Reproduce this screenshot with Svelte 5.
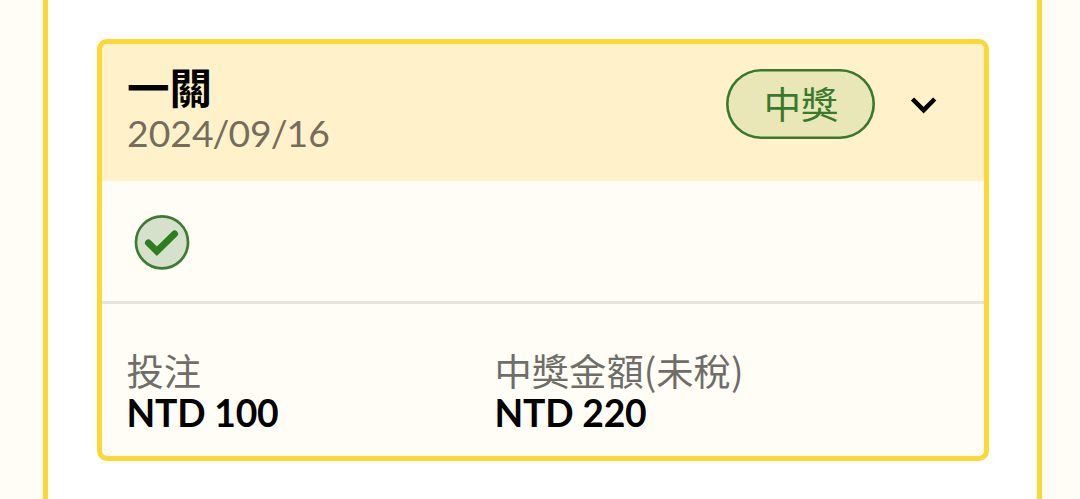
<script lang="ts">
	const bet = {
		title: '一關',
		date: '2024/09/16',
		status: '中獎'
	};

	const amounts = [
		{ label: '投注', value: 'NTD 100' },
		{ label: '中獎金額(未稅)', value: 'NTD 220' }
	];

	const [year, month, day] = bet.date.split('/');

	let open = $state(true);
</script>

<main class="panel">
	<section class="card">
		<header class="card-header">
			<div>
				<h2>{bet.title}</h2>
				<p class="date">{year}<span class="slash">/</span>{month}<span class="slash">/</span>{day}</p>
			</div>
			<span class="status">{bet.status}</span>
			<button class="toggle" aria-label={bet.title} aria-expanded={open} onclick={() => (open = !open)}>
				<svg class:closed={!open} width="28" height="20" viewBox="0 0 28 20">
					<path d="M2.5 4 L13.6 15.2 L24.7 4" fill="none" stroke="#000" stroke-width="4.6" />
				</svg>
			</button>
		</header>

		{#if open}
			<div class="result">
				<svg width="56" height="56" viewBox="0 0 56 56">
					<circle cx="28" cy="28.3" r="26" fill="#d6e1cb" stroke="#3b7c31" stroke-width="2.7" />
					<path
						d="M14.4 28.8 L22.9 37.2 L40.6 19.8"
						fill="none"
						stroke="#2e7d1e"
						stroke-width="6.8"
						stroke-linecap="round"
					/>
				</svg>
			</div>
			<div class="amounts">
				{#each amounts as item}
					<div>
						<p class="label">{item.label}</p>
						<p class="value">{item.value}</p>
					</div>
				{/each}
			</div>
		{/if}
	</section>
</main>

<style>
	:global(body) {
		background: #fffdf5;
		overflow: hidden;
	}

	.panel {
		box-sizing: border-box;
		height: 499px;
		margin: 0 38px 0 43px;
		padding: 39px 48px 0 49px;
		border: solid #fdd835;
		border-width: 0 5px;
		background: #fff;
		font-family: Lato, 'Noto Sans CJK TC', sans-serif;
		font-size: 37.3px;
	}

	.card {
		box-sizing: border-box;
		height: 422px;
		border: 5px solid #fdd835;
		border-radius: 10px;
		background: #fffdf5;
		overflow: hidden;
	}

	.card-header {
		box-sizing: border-box;
		display: flex;
		align-items: flex-start;
		height: 137px;
		padding: 22px 46px 0 25px;
		background: #fff2cb;
	}

	h2,
	p {
		margin: 0;
	}

	h2 {
		font-size: 42.5px;
		font-weight: 700;
		line-height: 44px;
	}

	.date {
		line-height: 46px;
		color: #756d5b;
	}

	.slash {
		margin: 0 -1px;
	}

	.status {
		box-sizing: border-box;
		width: 149px;
		height: 70px;
		margin: 2.5px 0 0 auto;
		padding-left: 1px;
		border-radius: 35px;
		background: #e9e6b8;
		box-shadow: inset 0 0 0 2.6px #377a2b;
		color: #377a2b;
		line-height: 72px;
		text-align: center;
	}

	.toggle {
		display: block;
		margin: 29px 0 0 35px;
		padding: 0;
		border: 0;
		background: none;
		cursor: pointer;
	}

	.toggle svg {
		display: block;
	}

	.closed {
		transform: rotate(180deg);
	}

	.result {
		box-sizing: border-box;
		height: 123px;
		padding: 33px 32px;
		border-bottom: 3px solid #e7e4de;
	}

	.result svg {
		display: block;
	}

	.amounts {
		display: grid;
		grid-template-columns: 368px 1fr;
		padding: 45px 25px 0 24.5px;
	}

	.label {
		font-family: 'Noto Sans CJK TC', sans-serif;
		line-height: 43px;
		color: #6f6d69;
	}

	.value {
		font-weight: 700;
		letter-spacing: -0.2px;
		line-height: 41px;
	}
</style>
